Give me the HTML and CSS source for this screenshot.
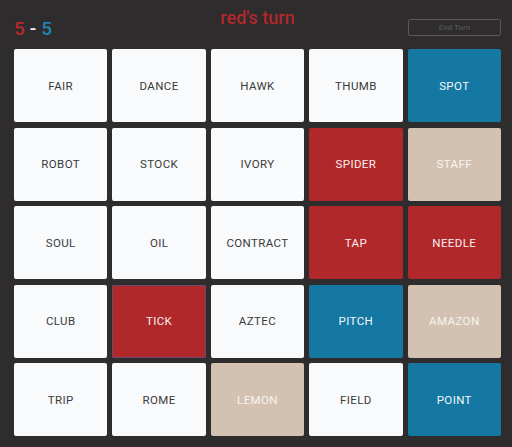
FILE: index.html
```html
<!DOCTYPE html>
<html lang="en">
<head>
    <meta charset="UTF-8">
    <meta name="viewport" content="width=device-width, initial-scale=1.0">
    <title>Codenames</title>
    <link rel="stylesheet" href="styles.css">
</head>
<body>
    <div class="game">
        <div class="top-bar">
            <div class="score">
                <span class="red-score">5</span>
                <span class="dash">-</span>
                <span class="blue-score">5</span>
            </div>
            <h1 class="turn">red's turn</h1>
            <button class="end-turn">End Turn</button>
        </div>

        <div class="board">
            <div class="card">FAIR</div>
            <div class="card">DANCE</div>
            <div class="card">HAWK</div>
            <div class="card">THUMB</div>
            <div class="card blue">SPOT</div>

            <div class="card">ROBOT</div>
            <div class="card">STOCK</div>
            <div class="card">IVORY</div>
            <div class="card red">SPIDER</div>
            <div class="card neutral">STAFF</div>

            <div class="card">SOUL</div>
            <div class="card">OIL</div>
            <div class="card">CONTRACT</div>
            <div class="card red">TAP</div>
            <div class="card red">NEEDLE</div>

            <div class="card">CLUB</div>
            <div class="card red selected">TICK</div>
            <div class="card">AZTEC</div>
            <div class="card blue">PITCH</div>
            <div class="card neutral">AMAZON</div>

            <div class="card">TRIP</div>
            <div class="card">ROME</div>
            <div class="card neutral">LEMON</div>
            <div class="card">FIELD</div>
            <div class="card blue">POINT</div>
        </div>
    </div>
</body>
</html>
```

FILE: styles.css
```css
/* Dark board with red / blue teams */
body {
    margin: 0;
    background-color: #2e2c2d;
    font-family: 'Roboto', sans-serif;
    color: #f0f0f0;
}

.game {
    padding: 0 11px 0 14px;
}

.top-bar {
    display: grid;
    grid-template-columns: 1fr auto 1fr;
    align-items: start;
    height: 49px;
}

.score {
    font-size: 19px;
    font-weight: 500;
    line-height: 1;
    margin-top: 19px;
    display: flex;
    gap: 5px;
}

.red-score {
    color: #b8292d;
}

.dash {
    color: #f4f4f4;
}

.blue-score {
    color: #1f84ae;
}

.turn {
    margin: 9px 0 0;
    font-size: 18px;
    font-weight: 500;
    line-height: 1;
    color: #b3282d;
}

.end-turn {
    justify-self: end;
    margin-top: 19px;
    width: 93px;
    height: 17px;
    padding: 0;
    background: transparent;
    border: 1px solid #5a5859;
    border-radius: 2px;
    color: #555354;
    font-family: inherit;
    font-size: 8px;
    font-weight: 500;
}

.board {
    display: grid;
    grid-template-columns: repeat(5, 1fr);
    grid-auto-rows: 73px;
    column-gap: 5px;
    row-gap: 5.5px;
}

.card {
    display: flex;
    justify-content: center;
    align-items: center;
    background-color: #f8fafc;
    border-radius: 2px;
    color: #3a3a3a;
    font-size: 11.5px;
    letter-spacing: 0.4px;
}

.card.blue {
    background-color: #1478a3;
    color: #f4f8fb;
}

.card.red {
    background-color: #b0282a;
    color: #fbeeee;
}

.card.neutral {
    background-color: #d3c2b1;
    color: #f8f4f0;
}

.card.selected {
    box-shadow: inset 0 0 0 1px #6a4a6e;
}
```
